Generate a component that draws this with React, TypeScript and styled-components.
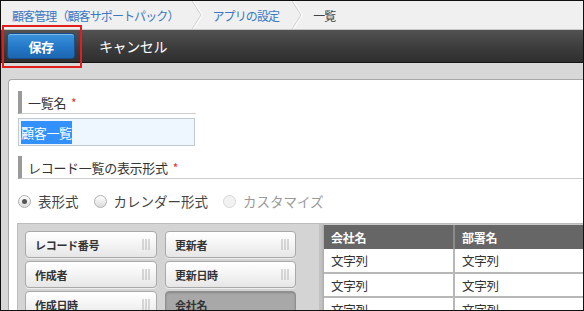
import React from "react";
import styled, { createGlobalStyle } from "styled-components";

const Global = createGlobalStyle`
  html, body { margin: 0; padding: 0; background: #fff; }
  body { font-family: "Noto Sans CJK JP", "Noto Sans", sans-serif; }
  * { box-sizing: border-box; }
`;

const Frame = styled.div`
  position: relative;
  width: 584px;
  height: 311px;
  border: 1px solid #111;
  overflow: hidden;
  display: flex;
  flex-direction: column;
  background: #d8d8d8;
`;

const Breadcrumb = styled.nav`
  height: 29px;
  flex: none;
  display: flex;
  align-items: stretch;
  background: #f0f0f0;
  border-bottom: 1px solid #c8c8c8;
  padding-left: 11px;
`;

const Crumb = styled.span<{ $link?: boolean }>`
  display: flex;
  align-items: center;
  font-size: 12px;
  letter-spacing: -0.9px;
  color: ${(p) => (p.$link ? "#3a78c4" : "#444")};
  white-space: nowrap;
`;

const Sep = styled.svg`
  flex: none;
  width: 12px;
  height: 28px;
  margin: 0 9px 0 13px;
`;

const Toolbar = styled.div`
  height: 33px;
  flex: none;
  display: flex;
  align-items: center;
  padding-left: 6px;
  background: linear-gradient(#525252, #3a3a3a 60%, #2f2f2f);
  border-bottom: 1px solid #151515;
`;

const SaveButton = styled.button`
  width: 68px;
  height: 26px;
  border: 1px solid #1b4e8c;
  border-radius: 3px;
  background: linear-gradient(#3b93dc, #2478c8 55%, #1c66b2);
  box-shadow: inset 0 1px 0 rgba(255, 255, 255, 0.35);
  color: #fff;
  font-family: inherit;
  font-weight: bold;
  font-size: 13px;
  letter-spacing: -0.5px;
  padding: 0;
`;

const CancelButton = styled.span`
  margin-left: 24px;
  color: #fff;
  font-size: 14px;
  letter-spacing: -0.4px;
`;

const Highlight = styled.div`
  position: absolute;
  left: 1px;
  top: 24px;
  width: 80px;
  height: 43px;
  border: 2px solid #e21d1d;
  pointer-events: none;
`;

const Main = styled.div`
  flex: 1;
  padding: 16px 0 0 7px;
  display: flex;
  min-height: 0;
`;

const Panel = styled.div`
  flex: 1;
  background: #fff;
  border: 1px solid #a8a8a8;
  border-right: none;
  border-bottom: none;
  border-top-left-radius: 4px;
  padding: 11px 0 0 8px;
  display: flex;
  flex-direction: column;
  min-width: 0;
`;

const SectionHeader = styled.div<{ $width?: number }>`
  width: ${(p) => (p.$width ? `${p.$width}px` : "auto")};
  height: 23px;
  margin-left: 1px;
  border-left: 4px solid #9a9a9a;
  border-bottom: 1px solid #cfcfcf;
  padding-left: 6px;
  display: flex;
  align-items: center;
  font-size: 13px;
  color: #333;
  letter-spacing: -0.3px;
`;

const Required = styled.span`
  color: #e0332a;
  margin-left: 5px;
  font-size: 12px;
`;

const NameInput = styled.div`
  width: 177px;
  height: 28px;
  margin: 4px 0 10px 1px;
  border: 1px solid #c4c9cf;
  background: #eef6ff;
  padding: 2px 2px;
  display: flex;
  align-items: center;
`;

const Selected = styled.span`
  background: #3390ff;
  color: #fff;
  font-size: 13px;
  line-height: 23px;
  letter-spacing: -0.3px;
`;

const RadioRow = styled.div`
  height: 44px;
  display: flex;
  align-items: center;
  gap: 15px;
  padding-left: 1px;
`;

const RadioLabel = styled.label<{ $disabled?: boolean }>`
  display: flex;
  align-items: center;
  gap: 7px;
  font-size: 13.5px;
  color: ${(p) => (p.$disabled ? "#999" : "#444")};
`;

const RadioCircle = styled.span<{ $checked?: boolean; $disabled?: boolean }>`
  width: 13px;
  height: 13px;
  border-radius: 50%;
  border: 1px solid ${(p) => (p.$disabled ? "#d8d8d8" : "#b0b0b0")};
  background: ${(p) => (p.$disabled ? "#f2f2f2" : "linear-gradient(#ffffff, #dcdcdc)")};
  display: flex;
  align-items: center;
  justify-content: center;
  &::after {
    content: "";
    width: 5px;
    height: 5px;
    border-radius: 50%;
    background: ${(p) => (p.$checked ? "#555" : "transparent")};
  }
`;

const Designer = styled.div`
  flex: 1;
  display: flex;
  background: #d4d4d4;
  border-top: 1px solid #bdbdbd;
  border-left: 1px solid #bdbdbd;
  min-height: 0;
`;

const Palette = styled.div`
  width: 306px;
  flex: none;
  padding: 7px 0 0 7px;
  display: grid;
  grid-template-columns: 132px 131px;
  grid-auto-rows: 27px;
  column-gap: 8px;
  row-gap: 3px;
  align-content: start;
  border-right: 5px solid #c2c2c2;
`;

const Chip = styled.div<{ $placeholder?: boolean }>`
  border: 1px solid ${(p) => (p.$placeholder ? "#8f8f8f" : "#a9a9a9")};
  border-radius: 4px;
  background: ${(p) =>
    p.$placeholder ? "#a8a8a8" : "linear-gradient(#ffffff, #f4f4f4 50%, #e6e6e6)"};
  box-shadow: ${(p) => (p.$placeholder ? "inset 0 1px 2px rgba(0,0,0,0.2)" : "0 1px 0 rgba(255,255,255,0.6)")};
  display: flex;
  align-items: center;
  justify-content: space-between;
  padding: 0 6px 0 9px;
  font-size: 11px;
  font-weight: bold;
  color: #333;
  letter-spacing: -0.3px;
`;

const Grip = styled.svg`
  width: 8px;
  height: 11px;
  flex: none;
`;

const Table = styled.table`
  border-collapse: collapse;
  margin-top: 1px;
  align-self: flex-start;
  table-layout: fixed;
  width: 300px;
  flex: none;
  box-shadow: -1px 0 2px rgba(0, 0, 0, 0.15);
`;

const Th = styled.th<{ $width?: number }>`
  width: ${(p) => (p.$width ? `${p.$width}px` : "auto")};
  height: 24px;
  background: #666;
  color: #fff;
  font-size: 12px;
  font-weight: bold;
  text-align: left;
  padding: 0 7px;
  border-right: 2px solid #8a8a8a;
  letter-spacing: -0.3px;
`;

const Td = styled.td`
  height: 24px;
  background: #fff;
  color: #333;
  font-size: 12.5px;
  padding: 0 7px;
  border-right: 2px solid #b8b8b8;
  border-bottom: 2px solid #b8b8b8;
  letter-spacing: -0.3px;
`;

const Chevron = () => (
  <Sep viewBox="0 0 12 28">
    <polyline points="1,0 10,14 1,28" fill="none" stroke="#fafafa" strokeWidth="2" />
    <polyline points="0,0 9,14 0,28" fill="none" stroke="#cfcfcf" strokeWidth="1" />
  </Sep>
);

const GripIcon = () => (
  <Grip viewBox="0 0 8 11">
    <line x1="1" y1="0" x2="1" y2="11" stroke="#b5b5b5" strokeWidth="1" />
    <line x1="4" y1="0" x2="4" y2="11" stroke="#b5b5b5" strokeWidth="1" />
    <line x1="7" y1="0" x2="7" y2="11" stroke="#b5b5b5" strokeWidth="1" />
  </Grip>
);

const fields: { label: string; placeholder?: boolean }[] = [
  { label: "レコード番号" },
  { label: "更新者" },
  { label: "作成者" },
  { label: "更新日時" },
  { label: "作成日時" },
  { label: "会社名", placeholder: true },
];

const columns: { label: string; width?: number }[] = [
  { label: "会社名", width: 130 },
  { label: "部署名" },
];
const rows = [0, 1, 2];

export default function App() {
  return (
    <>
      <Global />
      <Frame>
        <Breadcrumb>
          <Crumb $link>顧客管理（顧客サポートパック）</Crumb>
          <Chevron />
          <Crumb $link>アプリの設定</Crumb>
          <Chevron />
          <Crumb>一覧</Crumb>
        </Breadcrumb>
        <Toolbar>
          <SaveButton>保存</SaveButton>
          <CancelButton>キャンセル</CancelButton>
        </Toolbar>
        <Main>
          <Panel>
            <SectionHeader $width={178}>
              一覧名<Required>*</Required>
            </SectionHeader>
            <NameInput>
              <Selected>顧客一覧</Selected>
            </NameInput>
            <SectionHeader>
              レコード一覧の表示形式<Required>*</Required>
            </SectionHeader>
            <RadioRow>
              <RadioLabel>
                <RadioCircle $checked />
                表形式
              </RadioLabel>
              <RadioLabel>
                <RadioCircle />
                カレンダー形式
              </RadioLabel>
              <RadioLabel $disabled>
                <RadioCircle $disabled />
                カスタマイズ
              </RadioLabel>
            </RadioRow>
            <Designer>
              <Palette>
                {fields.map((f) => (
                  <Chip key={f.label} $placeholder={f.placeholder}>
                    {f.label}
                    {!f.placeholder && <GripIcon />}
                  </Chip>
                ))}
              </Palette>
              <Table>
                <thead>
                  <tr>
                    {columns.map((c) => (
                      <Th key={c.label} $width={c.width}>
                        {c.label}
                      </Th>
                    ))}
                  </tr>
                </thead>
                <tbody>
                  {rows.map((r) => (
                    <tr key={r}>
                      {columns.map((c) => (
                        <Td key={c.label}>文字列</Td>
                      ))}
                    </tr>
                  ))}
                </tbody>
              </Table>
            </Designer>
          </Panel>
        </Main>
        <Highlight />
      </Frame>
    </>
  );
}
